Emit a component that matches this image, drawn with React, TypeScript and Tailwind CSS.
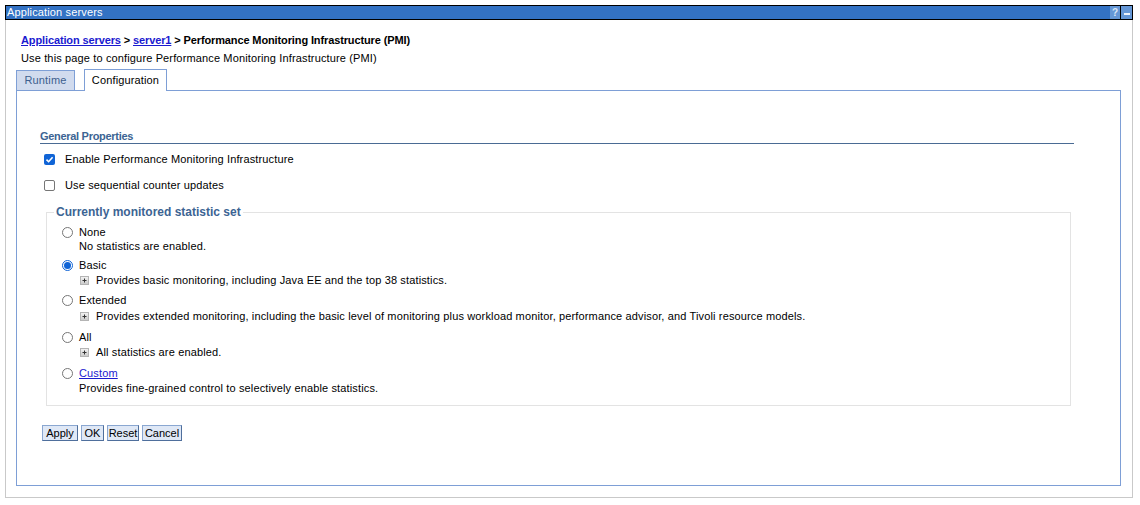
import React from 'react';

const Check = ({ checked }: { checked: boolean }) =>
  checked ? (
    <span className="flex h-[11px] w-[11px] items-center justify-center rounded-[2px] bg-[#1064d6]">
      <svg width="9" height="9" viewBox="0 0 9 9">
        <path d="M1.5 4.6 L3.6 6.7 L7.6 2.2" fill="none" stroke="#fff" strokeWidth="1.6" />
      </svg>
    </span>
  ) : (
    <span className="h-[11px] w-[11px] rounded-[2px] border border-[#767676] bg-white" />
  );

const Radio = ({ checked }: { checked: boolean }) =>
  checked ? (
    <span className="flex h-[11px] w-[11px] items-center justify-center rounded-full border border-[#1064d6] bg-white">
      <span className="h-[7px] w-[7px] rounded-full bg-[#1064d6]" />
    </span>
  ) : (
    <span className="h-[11px] w-[11px] rounded-full border border-[#767676] bg-white" />
  );

const Expand = () => (
  <svg width="9" height="9" viewBox="0 0 9 9" className="shrink-0">
    <defs>
      <linearGradient id="g" x1="0" y1="0" x2="0" y2="1">
        <stop offset="0" stopColor="#f4f4f4" />
        <stop offset="1" stopColor="#c9c9c9" />
      </linearGradient>
    </defs>
    <rect x="0.5" y="0.5" width="8" height="8" fill="url(#g)" stroke="#b4b4b4" />
    <path d="M2.5 4.5 H6.5 M4.5 2.5 V6.5" stroke="#333" strokeWidth="1" />
  </svg>
);

const options = [
  { label: 'None', desc: 'No statistics are enabled.', expand: false, checked: false, link: false, cls: '', dcls: 'mt-0' },
  { label: 'Basic', desc: 'Provides basic monitoring, including Java EE and the top 38 statistics.', expand: true, checked: true, link: false, cls: 'mt-[5px]', dcls: 'mt-[1px]' },
  { label: 'Extended', desc: 'Provides extended monitoring, including the basic level of monitoring plus workload monitor, performance advisor, and Tivoli resource models.', expand: true, checked: false, link: false, cls: 'mt-[6px]', dcls: 'mt-[2px]' },
  { label: 'All', desc: 'All statistics are enabled.', expand: true, checked: false, link: false, cls: 'mt-[7px]', dcls: 'mt-[1px]' },
  { label: 'Custom', desc: 'Provides fine-grained control to selectively enable statistics.', expand: false, checked: false, link: true, cls: 'mt-[7px]', dcls: 'mt-[1px]' },
];

const buttons = [
  { label: 'Apply', w: 'w-[36px]' },
  { label: 'OK', w: 'w-[23px]' },
  { label: 'Reset', w: 'w-[32px]' },
  { label: 'Cancel', w: 'w-[40px]' },
];

export default function App() {
  return (
    <div className="h-[505px] w-[1140px] bg-white pl-[5px] pr-[7px] pt-[5px] font-['Liberation_Sans',Arial,sans-serif] text-[11px] tracking-[0.14px] text-[#222]">
      {/* title bar */}
      <div className="flex h-[15px] items-stretch border border-black bg-[#3372c4]">
        <span className="flex-1 pl-[1px] leading-[13px] text-white">Application servers</span>
        <span className="flex w-[10px] items-center justify-center bg-[#6597d6] text-[10px] font-bold leading-none tracking-normal text-[#dce8f7]">?</span>
        <span className="w-px bg-black" />
        <span className="flex w-[11px] items-center justify-center bg-[#6597d6]">
          <span className="mt-[3px] h-[2px] w-[6px] bg-[#eef3fb]" />
        </span>
      </div>

      {/* outer box */}
      <div className="h-[478px] border-x border-b border-[#c9c9c9] pl-[10px] pr-[11px] pt-[13px]">
        <div className="h-[14px] pl-[5px] font-bold leading-[14px] tracking-[-0.12px] text-black">
          <a className="text-[#1a1ad0] underline">Application servers</a>
          {' > '}
          <a className="text-[#1a1ad0] underline">server1</a>
          {' > Performance Monitoring Infrastructure (PMI)'}
        </div>
        <div className="mt-[4px] h-[14px] pl-[5px] leading-[14px] text-black">
          Use this page to configure Performance Monitoring Infrastructure (PMI)
        </div>

        {/* tabs */}
        <div className="mt-[4px] flex h-[21px] items-end">
          <div className="flex h-[20px] w-[59px] items-center justify-center border-x border-t border-[#7e9fd6] bg-[#d1dbee] text-[#3d5f8f]">
            Runtime
          </div>
          <div className="relative z-10 -mb-px ml-[9px] flex h-[22px] w-[83px] items-center justify-center border-x border-t border-[#7e9fd6] bg-white text-black">
            Configuration
          </div>
        </div>

        {/* panel */}
        <div className="h-[396px] border border-[#7e9fd6] pl-[23px] pr-[46px] pt-[39px]">
          <div className="h-[14px] border-b border-[#4a6b94] font-bold leading-[12px] tracking-[-0.3px] text-[#3c6493]">
            General Properties
          </div>

          <div className="mt-[8px] flex h-[14px] items-center pl-[4px]">
            <Check checked />
            <span className="ml-[10px] text-black">Enable Performance Monitoring Infrastructure</span>
          </div>
          <div className="mt-[12px] flex h-[14px] items-center pl-[4px]">
            <Check checked={false} />
            <span className="ml-[10px] text-black">Use sequential counter updates</span>
          </div>

          <fieldset className="ml-[6px] mr-[3px] mt-[13px] border border-[#e3e3e3] pb-[10px] pl-[7px] pt-[6px]">
            <legend className="px-[2px] text-[12px] font-bold leading-[14px] tracking-normal text-[#3c6493]">Currently monitored statistic set</legend>
            <div className="flex flex-col pl-[8px]">
              {options.map((o) => (
                <div key={o.label} className={o.cls}>
                  <div className="flex h-[14px] items-center">
                    <Radio checked={o.checked} />
                    <span className={o.link ? 'ml-[6px] text-[#1a1ad0] underline' : 'ml-[6px] text-black'}>{o.label}</span>
                  </div>
                  <div className={`${o.dcls} flex h-[14px] items-center pl-[17px] text-black`}>
                    {o.expand && (
                      <span className="ml-[1px] mr-[7px] flex">
                        <Expand />
                      </span>
                    )}
                    {o.desc}
                  </div>
                </div>
              ))}
            </div>
          </fieldset>

          <div className="ml-[2px] mt-[19px] flex gap-[3px]">
            {buttons.map((b) => (
              <button
                key={b.label}
                className={`${b.w} h-[16px] border border-b-[#4f6f9c] border-l-[#8aa7d1] border-r-[#4f6f9c] border-t-[#8aa7d1] bg-[#dfe8f6] text-[11px] leading-[14px] tracking-normal text-black`}
              >
                {b.label}
              </button>
            ))}
          </div>
        </div>
      </div>
    </div>
  );
}
